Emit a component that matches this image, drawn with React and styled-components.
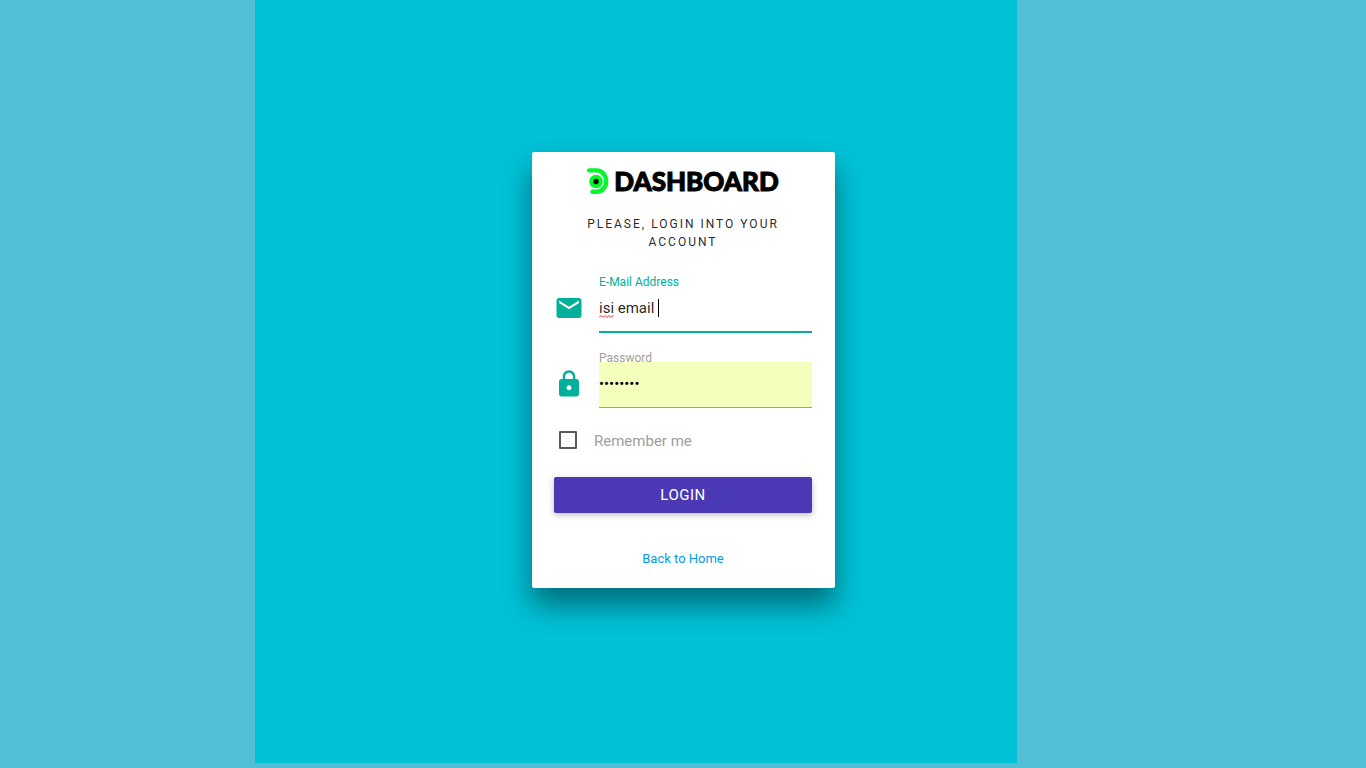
import React from 'react';
import styled, { createGlobalStyle } from 'styled-components';

const GlobalStyle = createGlobalStyle`
  *, *::before, *::after { box-sizing: border-box; }
  body {
    margin: 0;
    font-family: Roboto, sans-serif;
    font-size: 15px;
    background: #51c0d5;
    color: rgba(0, 0, 0, 0.87);
  }
`;

const Page = styled.main`
  display: grid;
  min-height: 100vh;
`;

const Backdrop = styled.div`
  grid-area: 1 / 1;
  margin: 0 25.55% 5px 18.67%;
  background: #00c1d6;
`;

const Card = styled.form`
  grid-area: 1 / 1;
  place-self: center;
  display: flex;
  flex-direction: column;
  width: 303px;
  max-width: 100%;
  margin: 0 0 28px 1px;
  padding: 16px 23px 20px 22px;
  border-radius: 2px;
  background: #fff;
  box-shadow: 0 17px 29px 0 rgba(0, 0, 0, 0.43);
`;

const Brand = styled.div`
  display: flex;
  align-items: center;
  justify-content: center;
  gap: 5px;
  height: 27px;
  color: #000;
  font: 900 26px/27px Lato, sans-serif;
  -webkit-text-stroke: 1px #000;
`;

const Title = styled.h1`
  margin: 20px 0 25px;
  font-size: 12px;
  line-height: 18px;
  font-weight: 400;
  letter-spacing: 2px;
  text-align: center;
  text-transform: uppercase;
`;

const Fields = styled.div`
  display: flex;
  flex-direction: column;
  gap: 20px;
`;

const FieldRow = styled.div`
  display: flex;
  align-items: flex-end;
  gap: 15px;
`;

const FieldIcon = styled.svg`
  flex: none;
  width: 30px;
  height: 30px;
  margin-bottom: 9px;
  fill: #00b09b;
`;

const Field = styled.div`
  position: relative;
  display: flex;
  flex-direction: column;
  flex: 1;
  min-width: 0;
`;

const Label = styled.label`
  margin-bottom: -2px;
  font-size: 12px;
  line-height: 12px;
  color: ${({ $active }) => ($active ? '#00b09b' : '#9e9e9e')};
`;

const Input = styled.input`
  width: 100%;
  height: 46px;
  padding: 0 0 2px;
  border: 0;
  border-bottom: 1px solid ${({ $active }) => ($active ? '#00b09b' : '#9e9e9e')};
  border-radius: 0;
  outline: 0;
  background: ${({ $filled }) => ($filled ? '#f4ffbc' : 'transparent')};
  box-shadow: ${({ $active }) => ($active ? '0 1px 0 0 #00b09b' : 'none')};
  color: ${({ $filled }) => ($filled ? '#000' : 'rgba(0, 0, 0, 0.87)')};
  font: 400 15px Roboto, sans-serif;
`;

const Caret = styled.span`
  position: absolute;
  left: 59px;
  bottom: 15px;
  width: 1px;
  height: 18px;
  background: #000;
`;

const Squiggle = styled.svg`
  position: absolute;
  left: 0;
  bottom: 14px;
  width: 15px;
  height: 3px;
  fill: none;
  stroke: #f03030;
`;

const Remember = styled.label`
  display: flex;
  align-items: flex-start;
  gap: 17px;
  margin: 23px 0 26px 5px;
  line-height: 20px;
  color: #9e9e9e;
`;

const Checkbox = styled.input`
  appearance: none;
  width: 18px;
  height: 18px;
  margin: 0;
  border: 2px solid #5a5a5a;
  border-radius: 1px;
  &:checked { background: #00b09b; }
`;

const LoginButton = styled.button`
  height: 36px;
  padding: 0;
  border: 0;
  border-radius: 2px;
  background: #4b38b5;
  box-shadow:
    0 2px 5px 0 rgba(0, 0, 0, 0.16),
    0 2px 10px 0 rgba(0, 0, 0, 0.12);
  color: #fff;
  font: 400 15px/36px Roboto, sans-serif;
  letter-spacing: 0.5px;
  text-transform: uppercase;
  cursor: pointer;
`;

const HomeLink = styled.a`
  align-self: center;
  margin-top: 36px;
  color: #039be5;
  font-size: 13px;
  line-height: 19px;
  text-decoration: none;
`;

function BrandMark() {
  return (
    <svg width="22" height="27" viewBox="0 0 22 27" aria-hidden="true">
      <path d="M2.2 2.4H9.5C15 2.4 19.2 7.3 19.2 13.2S15 23.8 9.5 23.8H5.5" fill="none" stroke="#00f92b" strokeWidth="4.4" strokeLinecap="round" />
      <circle cx="9" cy="13.5" r="6.8" fill="#00f92b" />
      <circle cx="9" cy="13.5" r="2.7" fill="#000" />
    </svg>
  );
}

export default function App() {
  return (
    <>
      <GlobalStyle />
      <Page>
        <Backdrop />
        <Card onSubmit={(event) => event.preventDefault()}>
          <Brand>
            <BrandMark />
            <span>DASHBOARD</span>
          </Brand>
          <Title>Please, login into your account</Title>
          <Fields>
            <FieldRow>
              <FieldIcon viewBox="0 0 24 24" aria-hidden="true">
                <path d="M20 4H4c-1.1 0-1.99.9-1.99 2L2 18c0 1.1.9 2 2 2h16c1.1 0 2-.9 2-2V6c0-1.1-.9-2-2-2zm0 4l-8 5-8-5V6l8 5 8-5v2z" />
              </FieldIcon>
              <Field>
                <Label htmlFor="email" $active>E-Mail Address</Label>
                <Input id="email" type="text" defaultValue="isi email " spellCheck={false} $active />
                <Squiggle viewBox="0 0 15 3" aria-hidden="true">
                  <path d="M0 2.5L2 .5 4 2.5 6 .5 8 2.5 10 .5 12 2.5 14 .5 15 1.5" />
                </Squiggle>
                <Caret />
              </Field>
            </FieldRow>
            <FieldRow>
              <FieldIcon viewBox="0 0 24 24" aria-hidden="true">
                <path d="M18 8h-1V6c0-2.76-2.24-5-5-5S7 3.24 7 6v2H6c-1.1 0-2 .9-2 2v10c0 1.1.9 2 2 2h12c1.1 0 2-.9 2-2V10c0-1.1-.9-2-2-2zm-6 9c-1.1 0-2-.9-2-2s.9-2 2-2 2 .9 2 2-.9 2-2 2zm3.1-9H8.9V6c0-1.71 1.39-3.1 3.1-3.1 1.71 0 3.1 1.39 3.1 3.1v2z" />
              </FieldIcon>
              <Field>
                <Label htmlFor="password">Password</Label>
                <Input id="password" type="password" defaultValue="password" $filled />
              </Field>
            </FieldRow>
          </Fields>
          <Remember>
            <Checkbox type="checkbox" />
            Remember me
          </Remember>
          <LoginButton type="submit">Login</LoginButton>
          <HomeLink href="#home">Back to Home</HomeLink>
        </Card>
      </Page>
    </>
  );
}
